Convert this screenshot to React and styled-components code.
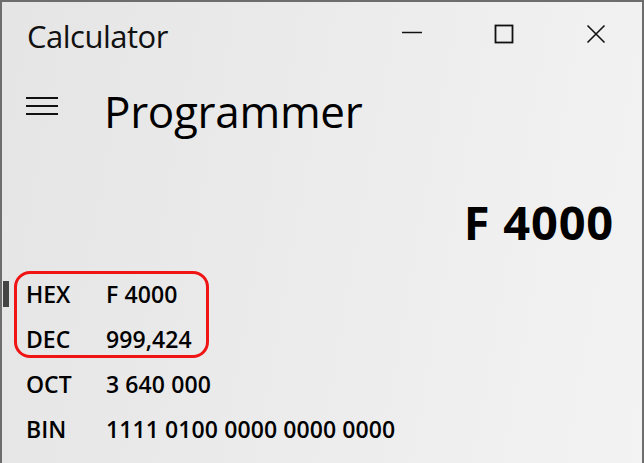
import React from 'react';
import styled, { createGlobalStyle } from 'styled-components';

const GlobalStyle = createGlobalStyle`
  html, body {
    margin: 0;
    padding: 0;
    background: #ececec;
  }
  body {
    font-family: 'Open Sans', 'Noto Sans', sans-serif;
    color: #000;
  }
`;

const Window = styled.div`
  width: 644px;
  height: 463px;
  box-sizing: border-box;
  border: 2px solid #6d6d6d;
  border-bottom: none;
  background: linear-gradient(100deg, #e5e5e5 0%, #ebebeb 45%, #f3f3f3 100%);
  display: flex;
  flex-direction: column;
  overflow: hidden;
`;

const TitleBar = styled.div`
  height: 64px;
  display: flex;
  align-items: flex-start;
  justify-content: space-between;
`;

const Title = styled.div`
  font-size: 31px;
  line-height: 40px;
  letter-spacing: -0.5px;
  margin: 14px 0 0 25px;
  color: #111;
`;

const Controls = styled.div`
  display: flex;
`;

const ControlButton = styled.div`
  width: 92px;
  height: 64px;
  display: flex;
  align-items: center;
  justify-content: center;
  color: #111;
`;

const Header = styled.div`
  display: flex;
  align-items: flex-start;
  margin-top: 17px;
  padding-left: 24px;
`;

const Hamburger = styled.svg`
  margin-top: 14px;
  flex-shrink: 0;
`;

const ModeTitle = styled.h1`
  margin: 0 0 0 46px;
  font-size: 44px;
  line-height: 56px;
  font-weight: 400;
  letter-spacing: -0.3px;
`;

const Display = styled.div`
  margin-top: 53px;
  padding-right: 28px;
  text-align: right;
  font-size: 47px;
  line-height: 60px;
  font-weight: 700;
  letter-spacing: 0.8px;
`;

const RadixList = styled.div`
  position: relative;
  margin-top: 19px;
  display: flex;
  flex-direction: column;
`;

const Row = styled.div`
  height: 45px;
  display: flex;
  align-items: center;
  font-size: 23px;
  font-weight: 600;
`;

const Indicator = styled.div`
  width: 6px;
  height: 26px;
  margin-left: 1px;
  background: ${p => (p.$active ? '#444' : 'transparent')};
`;

const Label = styled.span`
  width: 80px;
  margin-left: 17px;
`;

const Value = styled.span`
  letter-spacing: 0.1px;
`;

const Highlight = styled.div`
  position: absolute;
  top: 0;
  left: 12px;
  width: 195px;
  height: 87px;
  box-sizing: border-box;
  border: 3px solid #f01414;
  border-radius: 16px;
  pointer-events: none;
`;

const rows = [
  { label: 'HEX', value: 'F 4000', active: true },
  { label: 'DEC', value: '999,424' },
  { label: 'OCT', value: '3 640 000' },
  { label: 'BIN', value: '1111 0100 0000 0000 0000' },
];

const App = () => {
  return (
    <>
      <GlobalStyle />
      <Window>
        <TitleBar>
          <Title>Calculator</Title>
          <Controls>
            <ControlButton>
              <svg width="20" height="20" viewBox="0 0 20 20">
                <line x1="0" y1="8.5" x2="20" y2="8.5" stroke="currentColor" strokeWidth="1.5" />
              </svg>
            </ControlButton>
            <ControlButton>
              <svg width="20" height="20" viewBox="0 0 20 20">
                <rect x="1.5" y="1.5" width="17" height="17" fill="none" stroke="currentColor" strokeWidth="1.8" />
              </svg>
            </ControlButton>
            <ControlButton>
              <svg width="20" height="20" viewBox="0 0 20 20">
                <path d="M1.5 1.5 L18.5 18.5 M18.5 1.5 L1.5 18.5" stroke="currentColor" strokeWidth="1.6" fill="none" />
              </svg>
            </ControlButton>
          </Controls>
        </TitleBar>

        <Header>
          <Hamburger width="32" height="18" viewBox="0 0 32 18">
            <path d="M0 1 H32 M0 9 H32 M0 17 H32" stroke="#111" strokeWidth="2" />
          </Hamburger>
          <ModeTitle>Programmer</ModeTitle>
        </Header>

        <Display>F 4000</Display>

        <RadixList>
          {rows.map(r => (
            <Row key={r.label}>
              <Indicator $active={r.active} />
              <Label>{r.label}</Label>
              <Value>{r.value}</Value>
            </Row>
          ))}
          <Highlight />
        </RadixList>
      </Window>
    </>
  );
};

export default App;
